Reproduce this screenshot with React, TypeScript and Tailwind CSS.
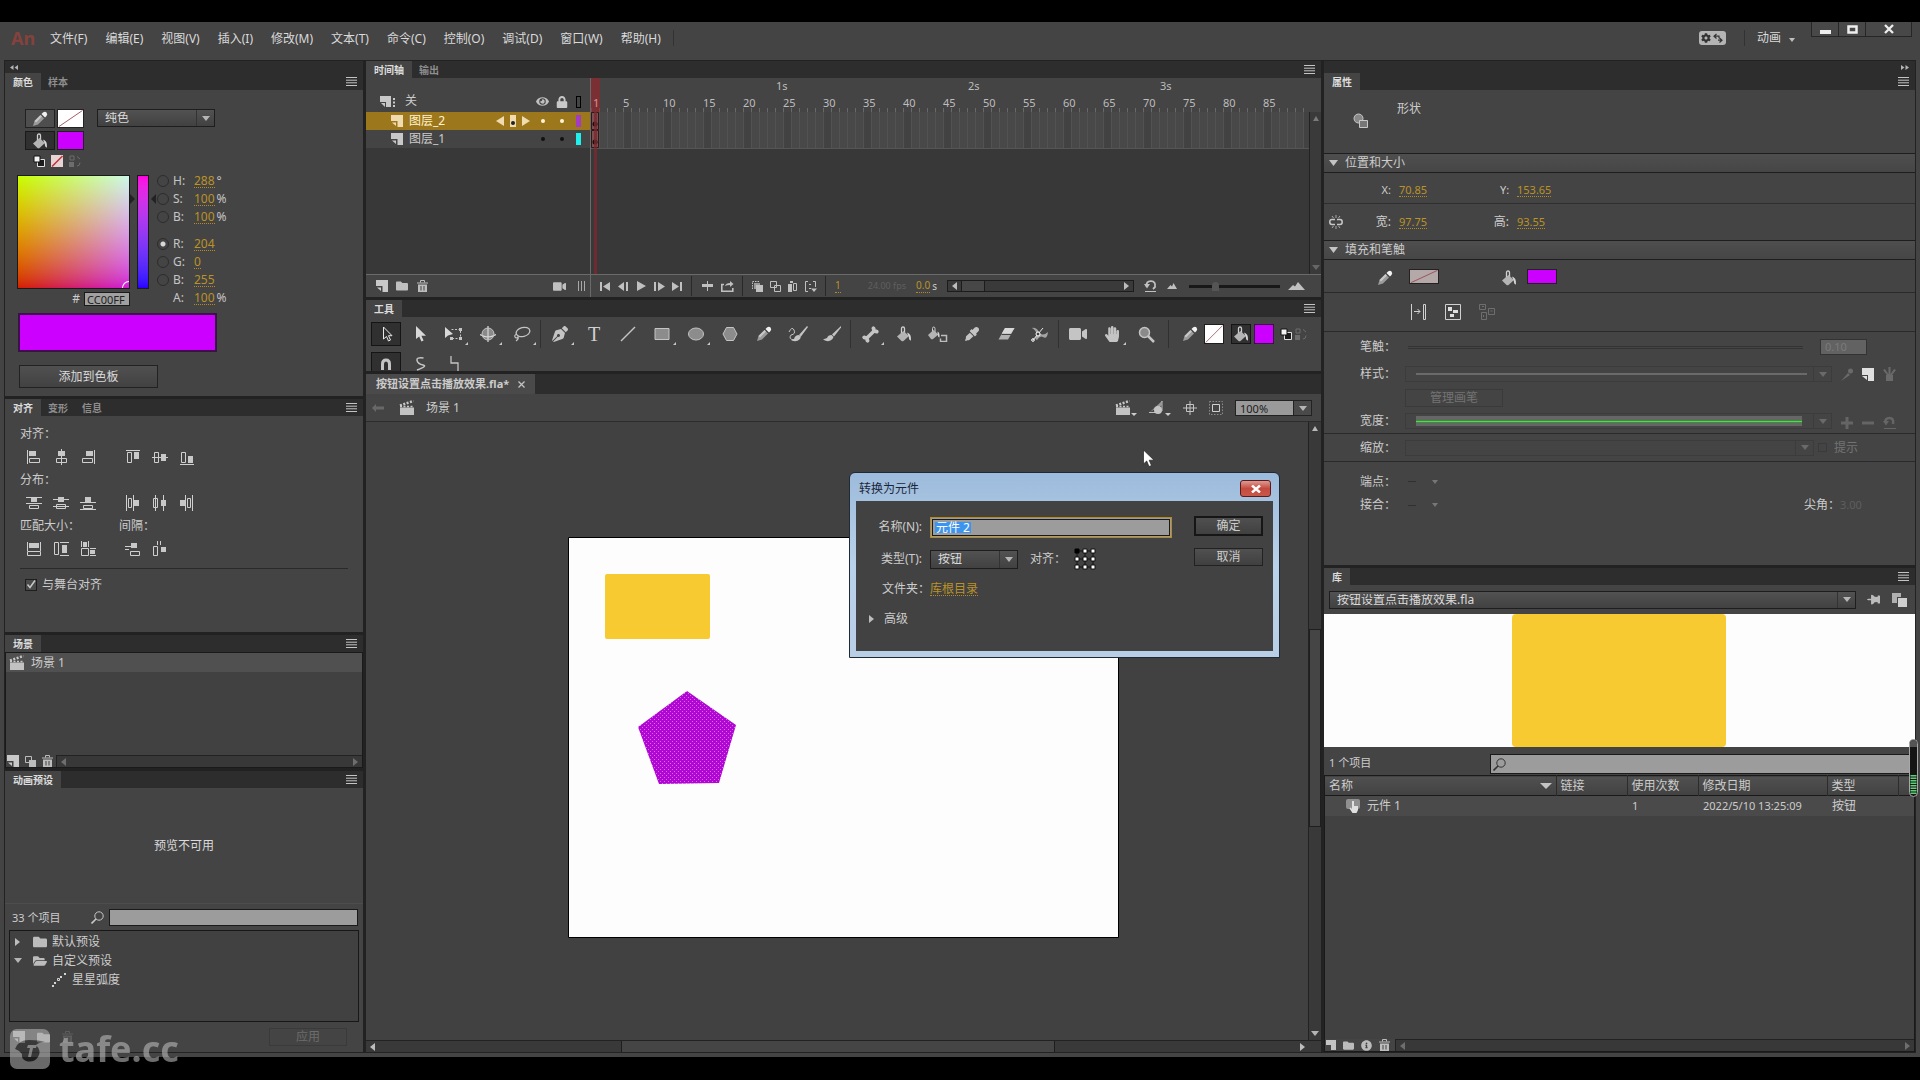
import { useState } from "react";
import type { ReactNode } from "react";
import { FaBone, FaCog, FaEye, FaEyeDropper, FaFolder, FaFolderOpen, FaHandPaper, FaInfoCircle, FaLock, FaPenNib, FaThumbtack, FaVideo } from "react-icons/fa";

const menus = ["文件(F)", "编辑(E)", "视图(V)", "插入(I)", "修改(M)", "文本(T)", "命令(C)", "控制(O)", "调试(D)", "窗口(W)", "帮助(H)"];
const frameNumbers = Array.from({ length: 17 }, (_, i) => (i + 1) * 5);

/* ---------- icons ---------- */

function Svg({ w = 16, h = 16, className = "", children }: { w?: number; h?: number; className?: string; children: ReactNode }) {
  return (
    <svg width={w} height={h} viewBox={`0 0 ${w} ${h}`} fill="none" className={`shrink-0 ${className}`} aria-hidden="true">
      {children}
    </svg>
  );
}

const Menu = () => <Svg w={11} h={9}><path d="M0 .5h11M0 3.2h11M0 5.8h11M0 8.5h11" stroke="#c4c4c4" /></Svg>;

const Pencil = () => (
  <Svg>
    <path d="M1 15l1.500-5 6-6 3.500 3.500-6 6z" fill="#9a9a9a" />
    <path d="M2.500 10l6-6 1.500 1.500-6 6z" fill="#c8c8c8" />
    <path d="M9.500 3l1.500-1.500q2-1.500 3.500 0t0 3.500L13 6.500z" fill="#f2f2f2" />
  </Svg>
);

const Bucket = () => (
  <Svg>
    <path d="M5.500 8V2.500q0-1.500 1.500-1.500t1.500 1.500V7" stroke="#cfcfcf" strokeWidth="1.300" />
    <path d="M1 10.500L7.500 5l5.500 5-5.500 5q-1 .6-2 0z" fill="#b4b4b4" />
    <path d="M11 6.500q4.500 1 4 8-2 0-2.200-3.500z" fill="#d4d4d4" />
  </Svg>
);

const InkBottle = () => (
  <Svg w={20}>
    <path d="M4.500 7V2.500q0-1.500 1.200-1.500t1.300 1.500V6" stroke="#cfcfcf" />
    <path d="M0 9l5.500-5 5 4.500L5 13q-1 .6-2 0z" fill="#b4b4b4" />
    <path d="M9.500 5.500q2.500 1 2 6-1.500 0-1.700-2.500z" fill="#d4d4d4" />
    <path d="M13 9.500h5.500v6h-6v-3" stroke="#bdbdbd" strokeWidth="1.500" />
  </Svg>
);

const Clapper = () => (
  <Svg>
    <path d="M1 7.500h14V15H1z" fill="#c2c2c2" />
    <path d="M1 5.500L14.500 1" stroke="#c8c8c8" strokeWidth="2.500" strokeDasharray="2 1.500" />
    <path d="M1 6.500h14" stroke="#c8c8c8" strokeWidth="1.500" strokeDasharray="2 1.500" />
  </Svg>
);

const Layer = ({ fill = "#c8c8c8" }: { fill?: string }) => (
  <Svg w={12} h={12}><path d="M0 0h12v12H6.500V6H0z" fill={fill} /><path d="M1 7.500h4V11z" fill={fill} /></Svg>
);

const Trash = ({ fill = "#bdbdbd" }: { fill?: string }) => (
  <Svg w={11} h={12}>
    <path d="M0 3h11M3.500 2.500v-2h4v2" stroke={fill} />
    <path d="M1 4.500h9V12H1zM3.500 6v4.500h1V6zm3 0v4.500h1V6z" fill={fill} fillRule="evenodd" />
  </Svg>
);

const Search = ({ stroke = "#c8c8c8" }: { stroke?: string }) => (
  <Svg w={13} h={13}><circle cx="8" cy="5" r="4.200" stroke={stroke} /><path d="M5 8L.5 12.500" stroke={stroke} strokeWidth="1.600" /></Svg>
);

const NoColor = () => (
  <svg viewBox="0 0 26 18" preserveAspectRatio="none" className="h-full w-full" aria-hidden="true"><path d="M1 17.500L25.500.5" stroke="#9e5560" /></svg>
);

const SmallBw = () => (
  <Svg w={12} h={12}><path d="M4.500 4.500h7v7h-7z" fill="#1c1c1c" stroke="#e0e0e0" /><path d="M1 1h6v6H1z" fill="#f4f4f4" stroke="#111" /></Svg>
);

const SmallSwap = () => (
  <Svg w={12} h={12}><path d="M1 1h4v4H1zM8 1.500l3 2.500M8 11q3 0 3-3.500" stroke="#6d6d6d" /><path d="M0 7h5v5H0z" fill="#6d6d6d" /></Svg>
);

const Down = ({ fill = "#b5b5b5" }: { fill?: string }) => <Svg w={8} h={5}><path d="M0 0h8L4 5z" fill={fill} /></Svg>;
const Up = ({ fill = "#7a7a7a" }: { fill?: string }) => <Svg w={6} h={5}><path d="M0 5h6L3 0z" fill={fill} /></Svg>;
const Right = ({ fill = "#bdbdbd" }: { fill?: string }) => <Svg w={5} h={8}><path d="M0 0v8l5-4z" fill={fill} /></Svg>;
const Left = ({ fill = "#bdbdbd" }: { fill?: string }) => <Svg w={5} h={8}><path d="M5 0v8L0 4z" fill={fill} /></Svg>;

/* align icons: `line` is stroked, `solid` is filled */
function AlignIcon({ line, solid }: { line: string; solid: string }) {
  return <Svg><path d={line} stroke="#cfcfcf" /><path d={solid} fill="#c8c8c8" /></Svg>;
}

const alignIcons = [
  { name: "左对齐", line: "M1.500 1v14M3.500 9.500h10v4h-10z", solid: "M3 2h7v5H3z" },
  { name: "水平中齐", line: "M8.500 0v16M3.500 9.500h10v4h-10z", solid: "M5 2h7v5H5z" },
  { name: "右对齐", line: "M14.500 1v14M2.500 9.500h10v4h-10z", solid: "M6 2h7v5H6z" },
  { name: "顶对齐", line: "M1 1.500h14M2.500 3.500h4v10h-4z", solid: "M9 3h5v7H9z" },
  { name: "垂直中齐", line: "M0 8.500h16M2.500 3.500h4v10h-4z", solid: "M9 5h5v7H9z" },
  { name: "底对齐", line: "M1 15.500h14M2.500 3.500h4v10h-4z", solid: "M9 7h5v7H9z" },
];
const distributeIcons = [
  { name: "顶部分布", line: "M0 2.500h16M0 8.500h16M3.500 10.500h9v3h-9z", solid: "M5 3h6v4H5z" },
  { name: "垂直居中分布", line: "M0 4.500h16M0 11.500h16M3.500 9.500h9v4h-9z", solid: "M5 2h6v5H5z" },
  { name: "底部分布", line: "M0 7.500h16M0 14.500h16M3.500 10.500h9v3h-9z", solid: "M5 2h6v5H5z" },
  { name: "左侧分布", line: "M1.500 0v16M8.500 0v16M3.500 3.500h3v9h-3z", solid: "M9 5h5v6H9z" },
  { name: "水平居中分布", line: "M3.500 0v16M11.500 0v16M1.500 3.500h4v9h-4z", solid: "M9 5h5v6H9z" },
  { name: "右侧分布", line: "M6.500 0v16M13.500 0v16M8.500 3.500h3v9h-3z", solid: "M1 5h5v6H1z" },
];
const sizeIcons = [
  { name: "匹配宽度", line: "M1.500 1v9M14.500 1v9M1.500 10.500h13v4h-13z", solid: "M3 2h10v5H3z" },
  { name: "匹配高度", line: "M7 1.500h9M7 14.500h9M1.500 1.500h4v12h-4z", solid: "M9 4h5v8H9z" },
  { name: "匹配宽和高", line: "M1.500 0v6M8.500 0v6M1.500 7.500h7v7h-7zM10 7.500h6M10 14.500h6", solid: "M3 1h4v5H3zM10 9h5v4h-5z" },
  { name: "垂直平均间隔", line: "M0 5.500h6M0 8.500h4M5.500 10.500h9v4h-9z", solid: "M6 2h6v5H6z" },
  { name: "水平平均间隔", line: "M5.500 0v4M8.500 0v4M1.500 5.500h4v9h-4z", solid: "M9 6h5v5H9z" },
];

/* ---------- shared controls ---------- */

function PanelTabs({ tabs }: { tabs: string[] }) {
  return (
    <div className="flex h-[17px] shrink-0 items-stretch bg-[#2d2d2d] text-[10px] leading-none">
      {tabs.map((t, i) => (
        <button key={t} type="button" className={i === 0 ? "bg-[#444444] px-2 font-bold text-[#dcdcdc]" : "px-[7px] font-bold text-[#8e8e8e]"}>{t}</button>
      ))}
      <button type="button" aria-label="面板菜单" className="ml-auto flex items-center px-[6px]"><Menu /></button>
    </div>
  );
}

function Select({ label, value, className, dim = false }: { label: string; value: string; className: string; dim?: boolean }) {
  return (
    <div className={`relative flex items-center border ${dim ? "border-[#3c3c3c]" : "border-[#1e1e1e] bg-linear-to-b from-[#525252] to-[#414141]"} ${className}`}>
      <select aria-label={label} disabled={dim} className="h-full w-full appearance-none bg-transparent pl-[7px] text-[12px] leading-none text-[#dadada] outline-none">
        <option>{value}</option>
      </select>
      <span className={`pointer-events-none absolute inset-y-0 right-0 flex w-[18px] items-center justify-center border-l ${dim ? "border-[#3c3c3c]" : "border-[#333333]"}`}>
        <Down fill={dim ? "#6a6a6a" : "#b5b5b5"} />
      </span>
    </div>
  );
}

function Hot({ children }: { children: ReactNode }) {
  return <button type="button" className="h-[14px] border-b border-dotted border-[#b58a20] leading-[13px] text-[#bb9227]">{children}</button>;
}

function IconButton({ label, className = "", children }: { label: string; className?: string; children: ReactNode }) {
  return <button type="button" aria-label={label} className={`flex shrink-0 items-center justify-center ${className}`}>{children}</button>;
}

function AlignGroup({ label, icons }: { label: string; icons: typeof alignIcons }) {
  return (
    <div>
      <div className="h-[18px] leading-[18px]">{label}</div>
      <div className="flex h-7 items-center">
        {icons.map((ic) => (
          <IconButton key={ic.name} label={ic.name} className="w-[27px]"><AlignIcon line={ic.line} solid={ic.solid} /></IconButton>
        ))}
      </div>
    </div>
  );
}

/* ---------- header ---------- */

function Header() {
  return (
    <header className="flex h-[38px] shrink-0 items-start text-[12px] text-[#dadada]">
      <div className="w-[50px] pl-[11px] pt-1 text-[18px] font-bold leading-6 text-[#84423d]">An</div>
      <nav className="flex gap-[18px] pt-[9px]">
        {menus.map((m) => <button key={m} type="button" className="leading-4 whitespace-nowrap">{m}</button>)}
      </nav>
      <span className="mt-2 ml-3 h-4 w-px bg-[#333333]" />
      <button type="button" aria-label="同步设置" className="mt-[9px] ml-auto flex h-[14px] w-[27px] items-center justify-center gap-[2px] rounded-[3px] bg-[#b4b4b4] text-[#333333]">
        <FaCog size={10} />
        <Svg w={10} h={10}><path d="M3.500 1L1 3.200 3.500 5.500M1.500 3.200H6v2M6.500 5L9 7.200 6.500 9.500M8.500 7.200H5" stroke="#333" strokeWidth="1.200" /></Svg>
      </button>
      <span className="mt-2 ml-[18px] h-4 w-px bg-[#333333]" />
      <button type="button" className="mt-2 ml-3 flex items-center gap-2 leading-4">动画<Svg w={6} h={4} className="mt-1"><path d="M0 0h6L3 4z" fill="#c0c0c0" /></Svg></button>
      <div className="mr-2 ml-4 flex h-[15px] border border-t-0 border-[#262626] bg-[#484848]">
        <IconButton label="最小化" className="w-[27px] border-r border-[#262626]"><Svg w={11} h={9}><path d="M0 5h11v4H0z" fill="#eeeeee" /></Svg></IconButton>
        <IconButton label="最大化" className="w-[27px] border-r border-[#262626]"><Svg w={11} h={9}><path d="M1.500 1.500h8v6h-8z" stroke="#eee" strokeWidth="2.500" /></Svg></IconButton>
        <IconButton label="关闭" className="w-[45px]"><Svg w={10} h={10}><path d="M1 1l8 8M9 1L1 9" stroke="#eee" strokeWidth="2.300" /></Svg></IconButton>
      </div>
    </header>
  );
}

/* ---------- left column ---------- */

function ColorPanel() {
  const [mode, setMode] = useState("R");
  const channels = [
    { id: "H", label: "H:", value: "288", unit: "°" },
    { id: "S", label: "S:", value: "100", unit: "%" },
    { id: "V", label: "B:", value: "100", unit: "%" },
    { id: "R", label: "R:", value: "204", unit: "" },
    { id: "G", label: "G:", value: "0", unit: "" },
    { id: "B", label: "B:", value: "255", unit: "" },
    { id: "A", label: "A:", value: "100", unit: "%" },
  ];
  return (
    <section className="h-[323px] shrink-0 bg-[#444444]">
      <PanelTabs tabs={["颜色", "样本"]} />
      <div className="pt-[19px]">
        <div className="flex pl-5">
          <div>
            <div className="flex gap-[2px]">
              <IconButton label="笔触颜色" className="h-[19px] w-[30px] border border-[#222222] bg-[#4e4e4e]"><Pencil /></IconButton>
              <button type="button" aria-label="无笔触" className="h-[19px] w-[27px] border border-[#222222] bg-white"><NoColor /></button>
            </div>
            <div className="mt-[3px] flex gap-[2px]">
              <IconButton label="填充颜色" className="h-[19px] w-[30px] border border-[#1a1a1a] bg-[#303030]"><Bucket /></IconButton>
              <button type="button" aria-label="填充色板" className="h-[19px] w-[27px] border border-[#222222] bg-[#cc00ff]" />
            </div>
            <div className="mt-[5px] flex h-3 gap-[6px] pl-2">
              <IconButton label="黑白"><SmallBw /></IconButton>
              <IconButton label="无颜色"><Svg w={12} h={12}><path d="M0 0h12v12H0z" fill="#e8d4d4" /><path d="M1 11.500L11.500 1" stroke="#c0303a" strokeWidth="1.500" /></Svg></IconButton>
              <IconButton label="交换颜色"><SmallSwap /></IconButton>
            </div>
          </div>
          <Select label="颜色类型" value="纯色" className="ml-[13px] h-[18px] w-[118px]" />
        </div>
        <div className="mt-[5px] flex pl-3">
          <div className="w-[113px] pt-[3px]">
            <div className="relative h-[114px] border border-[#1a1a1a] bg-linear-to-b from-[#c8ff00] to-[#d41c00]">
              <div className="h-full w-full bg-linear-to-b from-[#ccf8e8] to-[#d018d8] [mask-image:linear-gradient(to_right,transparent,black)]" />
              <span className="absolute right-0 bottom-0 h-[7px] w-[7px] rounded-tl-full border-t border-l border-white" />
            </div>
            <div className="mt-[3px] flex justify-end gap-1">
              <label htmlFor="hex" className="leading-[14px]">#</label>
              <input id="hex" defaultValue="CC00FF" className="h-[14px] w-[46px] border border-[#1a1a1a] bg-[#a0a0a0] px-[2px] text-[11px] leading-none text-[#222222] outline-none" />
            </div>
          </div>
          <div className="flex w-[26px] items-start pt-[3px]">
            <Svg w={5} h={10} className="mt-[19px]"><path d="M0 0v10l5-5z" fill="#222" /></Svg>
            <div className="mx-[2px] h-[114px] w-3 shrink-0 border border-[#1a1a1a] bg-linear-to-b from-[#ff00e0] to-[#2a00ff]" />
            <Svg w={5} h={10} className="mt-[19px]"><path d="M5 0v10L0 5z" fill="#222" /></Svg>
          </div>
          <div className="flex flex-col pl-px text-[#c4c4c4]">
            {channels.map((c) => (
              <div key={c.id} className={c.id === "R" ? "mt-[9px] flex h-[18px] items-center" : "flex h-[18px] items-center"}>
                {c.id === "A" ? <span className="w-3" /> : (
                  <input id={`ch-${c.id}`} type="radio" name="channel" checked={mode === c.id} onChange={() => setMode(c.id)} className="h-3 w-3 shrink-0 appearance-none rounded-full border border-[#2c2c2c] checked:bg-[radial-gradient(circle,#d8d8d8_2px,transparent_3px)]" />
                )}
                <label htmlFor={c.id === "A" ? undefined : `ch-${c.id}`} className="w-[25px] pl-1">{c.label}</label>
                <Hot>{c.value}</Hot>
                <span className="pl-[2px]">{c.unit}</span>
              </div>
            ))}
          </div>
        </div>
        <div className="mt-[6px] ml-[13px] h-[39px] w-[199px] border-2 border-[#3c1048] bg-[#cc00ff]" />
        <button type="button" className="mt-[13px] ml-[14px] h-[23px] w-[139px] border border-[#222222] bg-linear-to-b from-[#505050] to-[#424242] text-[#dadada]">添加到色板</button>
      </div>
    </section>
  );
}

function AlignPanel() {
  return (
    <section className="h-[233px] shrink-0 bg-[#444444]">
      <PanelTabs tabs={["对齐", "变形", "信息"]} />
      <div className="px-[15px] pt-[9px]">
        <div className="flex gap-[18px]">
          <AlignGroup label="对齐：" icons={alignIcons.slice(0, 3)} />
          <AlignGroup label=" " icons={alignIcons.slice(3)} />
        </div>
        <div className="flex gap-[18px]">
          <AlignGroup label="分布：" icons={distributeIcons.slice(0, 3)} />
          <AlignGroup label=" " icons={distributeIcons.slice(3)} />
        </div>
        <div className="flex gap-[18px]">
          <AlignGroup label="匹配大小：" icons={sizeIcons.slice(0, 3)} />
          <AlignGroup label="间隔：" icons={sizeIcons.slice(3)} />
        </div>
        <hr className="mt-[5px] border-[#2a2a2a]" />
        <label className="mt-2 flex items-center gap-[5px] pl-[5px]">
          <span className="relative flex h-3 w-3">
            <input type="checkbox" defaultChecked className="peer h-3 w-3 appearance-none border border-[#1e1e1e] bg-[#4a4a4a]" />
            <Svg w={12} h={12} className="pointer-events-none absolute inset-0 hidden peer-checked:block"><path d="M2.500 5.500L5 8.500l5-7" stroke="#c8c8c8" strokeWidth="1.500" /></Svg>
          </span>
          与舞台对齐
        </label>
      </div>
    </section>
  );
}

function ScrollTrack({ className = "" }: { className?: string }) {
  return (
    <div className={`flex flex-1 items-center justify-between border-t border-l border-[#222222] bg-[#383838] px-1 ${className}`}>
      <Left fill="#6e6e6e" />
      <Right fill="#6e6e6e" />
    </div>
  );
}

function ScenePanel() {
  return (
    <section className="flex h-[133px] shrink-0 flex-col bg-[#444444]">
      <PanelTabs tabs={["场景"]} />
      <div className="flex flex-1 flex-col border border-[#1a1a1a] bg-[#414141]">
        <div className="flex h-[19px] items-center gap-[6px] bg-[#505050] pl-[3px]"><Clapper />场景 1</div>
        <div className="mt-auto flex h-3">
          <div className="flex w-[50px] items-center gap-[6px] pl-px">
            <IconButton label="添加场景"><Layer /></IconButton>
            <IconButton label="重制场景"><Svg w={11} h={11}><path d="M.5.5h6v6h-6z" stroke="#bdbdbd" /><path d="M4 4h7v7H4z" fill="#bdbdbd" /></Svg></IconButton>
            <IconButton label="删除场景"><Trash /></IconButton>
          </div>
          <ScrollTrack />
        </div>
      </div>
    </section>
  );
}

function PresetPanel() {
  return (
    <section className="flex flex-1 flex-col bg-[#444444]">
      <PanelTabs tabs={["动画预设"]} />
      <div className="flex h-[116px] items-center justify-center border-b border-[#4d4d4d] text-[#dadada]">预览不可用</div>
      <div className="flex items-center px-[5px] pt-[5px]">
        <label htmlFor="preset-search" className="w-[81px] pl-[2px] text-[11px]">33 个项目</label>
        <Search />
        <input id="preset-search" className="ml-[5px] h-[17px] min-w-0 flex-1 border border-[#1a1a1a] bg-[#9c9c9c] px-1 outline-none" />
      </div>
      <ul className="mx-1 mt-1 h-[92px] border border-[#181818] bg-[#414141] pt-px">
        <li className="flex h-[19px] items-center"><span className="w-[23px] pl-[5px]"><Right /></span><FaFolder size={14} color="#bcbcbc" /><span className="pl-[5px]">默认预设</span></li>
        <li className="flex h-[19px] items-center"><span className="w-[23px] pl-1"><Down /></span><FaFolderOpen size={14} color="#bcbcbc" /><span className="pl-[5px]">自定义预设</span></li>
        <li className="flex h-[19px] items-center pl-[42px]">
          <Svg w={14} h={14}><path d="M0 12h2v2H0zM2 9h2v2H2zM8 3h2v2H8zM12 0h2v2h-2z" fill="#d4d4d4" /><path d="M5.500 5.500h2v2h-2z" stroke="#d4d4d4" /></Svg>
          <span className="pl-[6px]">星星弧度</span>
        </li>
      </ul>
      <div className="flex items-center gap-3 pt-[6px] pr-4 pl-2">
        <IconButton label="另存预设"><Layer /></IconButton>
        <IconButton label="新建文件夹"><FaFolder size={13} color="#bcbcbc" /></IconButton>
        <IconButton label="删除预设"><Trash fill="#5c5c5c" /></IconButton>
        <button type="button" disabled className="ml-auto h-[18px] w-[78px] border border-[#3a3a3a] text-[#6c6c6c]">应用</button>
      </div>
    </section>
  );
}

/* ---------- timeline ---------- */

function LayerRow({ name, active = false }: { name: string; active?: boolean }) {
  const ink = active ? "#fff6d8" : "#111111";
  return (
    <div className={active ? "flex h-[18px] items-center bg-[#9c771c] pl-[25px] text-[#fff3cf]" : "flex h-[18px] items-center bg-[#444444] pl-[25px]"}>
      <Layer fill={active ? "#f0dcae" : "#c8c8c8"} />
      <span className="flex-1 pl-[6px]">{name}</span>
      {active && (
        <span className="flex items-center gap-[6px] pr-[11px]">
          <Svg w={8} h={10}><path d="M8 0v10L0 5z" fill="#f0dcae" /></Svg>
          <Svg w={6} h={12}><path d="M0 0h6v12H0z" fill="#f0dcae" /><circle cx="3" cy="8" r="2" fill="#222" /></Svg>
          <Svg w={8} h={10}><path d="M0 0v10l8-5z" fill="#f0dcae" /></Svg>
        </span>
      )}
      <Svg w={4} h={4}><circle cx="2" cy="2" r="2" fill={ink} /></Svg>
      <Svg w={4} h={4} className="ml-[15px]"><circle cx="2" cy="2" r="2" fill={ink} /></Svg>
      <span className={active ? "mr-[9px] ml-3 h-3 w-[5px] bg-[#a43bc4]" : "mr-[9px] ml-3 h-3 w-[5px] bg-[#20f0ec]"} />
    </div>
  );
}

function Timeline() {
  const keyframe = <Svg w={8} h={18}><path d="M.5.5h7v17h-7z" fill="#7c5050" stroke="#301818" /><circle cx="4" cy="12" r="2.500" fill="#1a1010" /></Svg>;
  return (
    <section className="flex h-[236px] shrink-0 flex-col bg-[#444444]">
      <PanelTabs tabs={["时间轴", "输出"]} />
      <div className="flex min-h-0 flex-1">
        <div className="flex w-[225px] shrink-0 flex-col border-r border-[#6a6a6a] bg-[#383838]">
          <div className="flex h-[34px] items-end bg-[#444444] pb-[4px] pl-[14px]">
            <Svg w={16} h={13}><path d="M0 1h11v11H6V7H0z" fill="#c8c8c8" /><path d="M1 8h4v4zM13 3h2v2h-2zM13 6.500h2v2h-2zM13 10h2v2h-2z" fill="#c8c8c8" /></Svg>
            <span className="flex-1 pl-[9px] leading-[14px]">关</span>
            <FaEye size={13} color="#c0c0c0" />
            <FaLock size={12} color="#c8c8c8" className="ml-[7px]" />
            <span className="mr-[9px] ml-2 h-3 w-[5px] border border-black" />
          </div>
          <LayerRow name="图层_2" active />
          <LayerRow name="图层_1" />
        </div>
        <div className="relative min-w-0 flex-1 overflow-hidden bg-[#383838]">
          <div className="h-[34px] bg-[#444444] bg-[repeating-linear-gradient(90deg,#686868_0_1px,transparent_1px_8px)] bg-[length:100%_4px] bg-bottom bg-no-repeat text-[11px] text-[#bdbdbd]">
            <div className="flex h-[17px] pt-px pl-[185px] leading-[14px]">
              {["1s", "2s", "3s"].map((s) => <span key={s} className="w-[192px] shrink-0">{s}</span>)}
            </div>
            <div className="relative flex leading-4">
              <span className="w-8 shrink-0 pl-[2px] text-white">1</span>
              {frameNumbers.map((n) => <span key={n} className="w-10 shrink-0">{n}</span>)}
            </div>
          </div>
          <div className="flex h-[37px] border-b border-[#555555] bg-[#484848] bg-[repeating-linear-gradient(90deg,#525252_0_1px,transparent_1px_8px),repeating-linear-gradient(90deg,transparent_0_32px,#424242_32px_40px)]">
            <div className="flex flex-col">{keyframe}{keyframe}</div>
          </div>
          <div className="absolute top-0 left-0 h-[34px] w-[9px] bg-[#b01c20]/50" />
          <div className="absolute top-[34px] bottom-0 left-[3px] w-[3px] bg-[#7c2830]/80" />
        </div>
        <div className="mt-[34px] flex w-3 shrink-0 flex-col items-center justify-between border-l border-[#222222] bg-[#3a3a3a] py-1">
          <Up /><Down fill="#666666" />
        </div>
      </div>
      <TimelineBar />
    </section>
  );
}

function TimelineBar() {
  const sep = <span className="mx-[5px] h-5 w-px shrink-0 bg-[#292929]" />;
  const fill = "#c0c0c0";
  const btn = "h-5 w-[18px]";
  return (
    <div className="flex h-[23px] shrink-0 items-center border-t border-[#6a6a6a]">
      <div className="flex w-[225px] shrink-0 items-center self-stretch border-r border-[#6a6a6a] pl-[10px]">
        <IconButton label="新建图层"><Layer /></IconButton>
        <IconButton label="新建文件夹" className="ml-2"><FaFolder size={12} color={fill} /></IconButton>
        <IconButton label="删除" className="ml-[9px]"><Trash /></IconButton>
        <IconButton label="添加摄像头" className="ml-auto"><FaVideo size={13} color={fill} /></IconButton>
        <Svg w={7} h={10} className="mr-[5px] ml-3"><path d="M.5 0v10M3.500 0v10M6.500 0v10" stroke="#a8a8a8" /></Svg>
      </div>
      <div className="flex items-center pl-[5px]">
        <IconButton label="转到第一帧" className={btn}><Svg w={10} h={9}><path d="M0 0h2v9H0zM10 0v9L3 4.500z" fill={fill} /></Svg></IconButton>
        <IconButton label="后退一帧" className={btn}><Svg w={11} h={9}><path d="M6 0v9L0 4.500z" fill={fill} /><path d="M8 0h2v9H8z" fill={fill} /></Svg></IconButton>
        <IconButton label="播放" className={btn}><Svg w={9} h={10}><path d="M0 0v10l9-5z" fill={fill} /></Svg></IconButton>
        <IconButton label="前进一帧" className={btn}><Svg w={11} h={9}><path d="M0 0h2v9H0zM4 0v9l7-4.500z" fill={fill} /></Svg></IconButton>
        <IconButton label="转到最后一帧" className={btn}><Svg w={10} h={9}><path d="M0 0v9l7-4.500zM8 0h2v9H8z" fill={fill} /></Svg></IconButton>
      </div>
      {sep}
      <IconButton label="帧居中" className="h-5 w-5"><Svg w={11} h={10}><path d="M0 3h5V0h1v3h5v3H6v4H5V6H0z" fill={fill} /></Svg></IconButton>
      <IconButton label="循环" className="h-5 w-5"><Svg w={13} h={11}><path d="M3 3.500H.8v6.700h11V7" stroke={fill} strokeWidth="1.600" /><path d="M4 5q1-3 5-3V0l3.500 3L9 6V4Q6 4 4 5z" fill={fill} /></Svg></IconButton>
      {sep}
      <IconButton label="绘图纸外观" className={btn}><Svg w={11} h={11}><path d="M4 4h7v7H4z" fill={fill} /><path d="M.5 8V.5H8" stroke={fill} strokeDasharray="1.500 1" /><path d="M2 2h6v2H4v4H2z" fill="#999" /></Svg></IconButton>
      <IconButton label="绘图纸外观轮廓" className={btn}><Svg w={11} h={11}><path d="M.5.5h6v6h-6zM4.500 4.500h6v6h-6z" stroke={fill} /></Svg></IconButton>
      <IconButton label="编辑多个帧" className={btn}><Svg w={10} h={11}><path d="M0 3h4v8H0zM2 0h3v2H2z" fill={fill} /><path d="M5.500 2.500h3v7h-3z" stroke={fill} /></Svg></IconButton>
      <IconButton label="修改标记" className={btn}><Svg w={12} h={11}><path d="M3 .5H.5v10H3M8 .5h2.500V6M4 3.500h2M4 7.500h2" stroke={fill} /><path d="M6 7.500h6L9 11z" fill={fill} /></Svg></IconButton>
      {sep}
      <span className="flex w-[116px] shrink-0 items-center pl-1 text-[10px]">
        <Hot>1</Hot>
        <span className="ml-[27px] text-[9px] text-[#5f5f5f]">24.00 fps</span>
        <span className="ml-[10px] flex items-center gap-[2px]"><Hot>0.0</Hot>s</span>
      </span>
      <div className="flex h-3 min-w-0 flex-1 items-center justify-between border border-[#1c1c1c] bg-[#3a3a3a] px-1">
        <Left /><span className="mr-auto ml-1 h-full w-6 border-x border-[#1c1c1c] bg-[#474747]" /><Right />
      </div>
      <IconButton label="重设缩放" className="ml-[10px] h-5 w-3"><Svg w={13} h={12}><path d="M2.500 6.500Q2 1 7 1.200T11 7L9 9" stroke={fill} strokeWidth="1.800" /><path d="M0 4h6L3 8.500z" fill={fill} /><path d="M1 11.500h11" stroke={fill} /></Svg></IconButton>
      <Svg w={10} h={6} className="ml-[11px]"><path d="M0 6l3.500-4L5 3.500 6.500 0 10 6z" fill={fill} /></Svg>
      <input type="range" aria-label="时间轴缩放" defaultValue={27} className="mr-2 ml-3 h-[3px] w-[91px] appearance-none bg-[#181818] [&::-webkit-slider-thumb]:h-[9px] [&::-webkit-slider-thumb]:w-[7px] [&::-webkit-slider-thumb]:appearance-none [&::-webkit-slider-thumb]:rounded-t-full [&::-webkit-slider-thumb]:bg-[#555555]" />
      <Svg w={17} h={8} className="mr-4"><path d="M0 8l5-5 2 1.500L10 0l7 8z" fill={fill} /></Svg>
    </div>
  );
}

/* ---------- tools ---------- */

function Tool({ label, more = false, active = false, children }: { label: string; more?: boolean; active?: boolean; children: ReactNode }) {
  return (
    <button type="button" aria-label={label} className="relative flex h-6 w-[34px] shrink-0 items-center justify-center">
      <span className={active ? "flex h-6 w-[30px] items-center justify-center border border-[#151515] bg-[#303030]" : "flex"}>{children}</span>
      {more && <Svg w={3} h={3} className="absolute right-[3px] bottom-px"><path d="M3 0v3H0z" fill="#c8c8c8" /></Svg>}
    </button>
  );
}

function Tools() {
  const sep = <span className="mr-[2px] ml-px h-7 w-px shrink-0 bg-[#303030]" />;
  const c = "#c4c4c4";
  return (
    <section className="flex h-[71px] shrink-0 flex-col overflow-hidden bg-[#444444]">
      <PanelTabs tabs={["工具"]} />
      <div className="flex shrink-0 items-center pt-[3px] pl-[3px]">
        <Tool label="选择工具" active><Svg><path d="M5.500 1v12l3-2.500 2 4.500 2-1-2-4.300h3.500z" stroke="#e8e8e8" /></Svg></Tool>
        <Tool label="部分选取工具"><Svg><path d="M4 0v13l3.200-2.500 2.200 5 2.200-1-2.200-4.800H14z" fill="#d8d8d8" /></Svg></Tool>
        <Tool label="任意变形工具" more><Svg w={18}><path d="M0 1v11l3-2.500L8 8z" fill="#d8d8d8" /><path d="M6.500 3.500h9v9h-10" stroke={c} strokeDasharray="2 1.500" /><path d="M14 2h3v3h-3zM14 11h3v3h-3zM5 11h3v3H5z" fill={c} /></Svg></Tool>
        <Tool label="3D旋转工具" more><Svg><circle cx="8" cy="8" r="6" fill="#8a8a8a" /><path d="M8 0v16M0 8.500q8 5 16 0" stroke="#d8d8d8" strokeWidth="1.200" /><circle cx="8" cy="8" r="6" stroke="#c4c4c4" /></Svg></Tool>
        <Tool label="套索工具" more><Svg w={18}><ellipse cx="10" cy="6" rx="7" ry="4.500" transform="rotate(-14 10 6)" stroke={c} strokeWidth="1.300" /><path d="M4 8q-3 1-2 3t3 0q1 2-2 4" stroke={c} strokeWidth="1.200" /></Svg></Tool>
        {sep}
        <Tool label="钢笔工具" more><FaPenNib size={16} color={c} className="-scale-x-100 rotate-90" /></Tool>
        <Tool label="文本工具"><span className="font-['Liberation_Serif',serif] text-[20px] leading-4 text-[#d0d0d0]">T</span></Tool>
        <Tool label="线条工具"><Svg><path d="M1 15L15 1" stroke={c} strokeWidth="1.500" /></Svg></Tool>
        <Tool label="矩形工具" more><Svg><path d="M1 2.500h14v11H1z" fill="#8c8c8c" stroke={c} /></Svg></Tool>
        <Tool label="椭圆工具" more><Svg><ellipse cx="8" cy="8" rx="7.500" ry="6" fill="#8c8c8c" stroke={c} /></Svg></Tool>
        <Tool label="多角星形工具"><Svg><path d="M4.500 1.500h7L15 8l-3.500 6.500h-7L1 8z" fill="#8c8c8c" stroke={c} /></Svg></Tool>
        <Tool label="铅笔工具"><Pencil /></Tool>
        <Tool label="画笔工具"><Svg w={20}><path d="M19 0l-8 9 2 1.500L20 1z" fill={c} /><path d="M11 9q-4 0-5 4l-3 1q5 3 9-1l1-2.500z" fill={c} /><path d="M1 6q3-6 5-2T3 9q-3 4 3 5" stroke={c} /></Svg></Tool>
        <Tool label="画笔工具 B"><Svg w={18}><path d="M18 0l-9 8.500 2 2L18 1.500z" fill={c} /><path d="M8.500 9Q5 9 4 12l-4 1.500q6 3.500 9.500-.5L10.500 11z" fill={c} /></Svg></Tool>
        {sep}
        <Tool label="骨骼工具" more><FaBone size={17} color={c} className="-rotate-45" /></Tool>
        <Tool label="颜料桶工具"><Bucket /></Tool>
        <Tool label="墨水瓶工具"><InkBottle /></Tool>
        <Tool label="滴管工具"><FaEyeDropper size={14} color={c} /></Tool>
        <Tool label="橡皮擦工具"><Svg w={17}><path d="M7 2h9.500L10 13.500H.5z" fill="#b0b0b0" /><path d="M7 2h9.500L13 7.500H3.800z" fill="#d8d8d8" /><path d="M3.500 8.500h9.500" stroke="#444" /></Svg></Tool>
        <Tool label="宽度工具"><Svg w={18}><path d="M1 2q4-1 7 4t9 0q-1 8-5 5-3-2-6 3-4-2 0-5Q5 4 1 2z" fill="#a4a4a4" /><path d="M2 14L12 2" stroke="#e8e8e8" /><circle cx="7" cy="8" r="2" fill="#444" stroke="#fff" /><circle cx="2" cy="14" r="1.300" stroke="#fff" /></Svg></Tool>
        {sep}
        <Tool label="摄像头"><FaVideo size={18} color={c} /></Tool>
        <Tool label="手形工具" more><FaHandPaper size={16} color={c} /></Tool>
        <Tool label="缩放工具"><Svg w={17} h={17}><circle cx="6.500" cy="6.500" r="5" fill="#8a8a8a" stroke={c} strokeWidth="1.500" /><path d="M10 10l6 6" stroke={c} strokeWidth="2.500" /></Svg></Tool>
        <span className="mx-[5px] h-7 w-px shrink-0 bg-[#303030]" />
        <IconButton label="笔触颜色" className="ml-2"><Pencil /></IconButton>
        <button type="button" aria-label="笔触色板" className="ml-[6px] h-5 w-5 shrink-0 border border-[#1e1e1e] bg-white"><NoColor /></button>
        <IconButton label="填充颜色" className="ml-[7px] h-5 w-5 border border-[#151515] bg-[#303030]"><Bucket /></IconButton>
        <button type="button" aria-label="填充色板" className="ml-[3px] h-5 w-5 shrink-0 border border-[#3a1046] bg-[#cc00ff]" />
        <IconButton label="黑白" className="ml-[6px]"><SmallBw /></IconButton>
        <IconButton label="交换颜色" className="ml-[3px]"><SmallSwap /></IconButton>
      </div>
      <div className="mt-1 flex shrink-0 items-center pl-[3px]">
        <Tool label="贴紧至对象" active><Svg w={14} h={14}><path d="M3.500 13V7Q3.500 3 7 3t3.500 4v6" stroke={c} strokeWidth="3" /></Svg></Tool>
        <Tool label="平滑"><Svg><path d="M11.500 2Q4 1 5 4.500T11 9t-6 5" stroke={c} strokeWidth="1.500" /></Svg></Tool>
        <Tool label="伸直"><Svg><path d="M5 0v7h7v8" stroke={c} strokeWidth="1.300" /></Svg></Tool>
      </div>
    </section>
  );
}

/* ---------- document ---------- */

function ConvertDialog() {
  return (
    <div role="dialog" aria-label="转换为元件" className="absolute top-[50px] left-[483px] w-[431px] rounded-t-md border border-[#1f2a33] bg-linear-to-b from-[#9dbbdc] via-[#b9d1ea] to-[#b9cfe6] px-[6px] pb-[6px] text-[12px]">
      <div className="flex h-[28px] items-center justify-between">
        <h2 className="pt-[3px] pl-[3px] text-[#1b2638]">转换为元件</h2>
        <button type="button" aria-label="关闭" className="mt-[3px] mr-[2px] flex h-[17px] w-[31px] items-center justify-center rounded-[3px] border border-[#5c1a1a] bg-linear-to-b from-[#dc9a92] via-[#c44a40] to-[#c8584a]">
          <Svg w={10} h={8}><path d="M1 .5l8 7M9 .5l-8 7" stroke="#fff" strokeWidth="2.400" /></Svg>
        </button>
      </div>
      <div className="flex h-[150px] bg-[#424242] pt-[15px] pr-[10px] pl-[13px]">
        <div className="flex-1">
          <div className="flex h-[22px] items-center">
            <label htmlFor="symbol-name" className="w-[61px] pr-2 text-right whitespace-nowrap">名称(N):</label>
            <div className="flex h-[21px] w-[242px] border border-[#b58a20] bg-[#9c9c9c] p-px">
              <div className="relative flex w-full border border-[#1a1a1a]">
                <span className="absolute inset-y-[2px] left-[2px] w-[36px] bg-[#3c94ee]" />
                <input id="symbol-name" defaultValue="元件 2" className="relative w-full bg-transparent px-[3px] text-[12px] leading-none text-white outline-none" />
              </div>
            </div>
          </div>
          <div className="mt-[10px] flex h-[22px] items-center">
            <span className="w-[61px] pr-2 text-right whitespace-nowrap">类型(T):</span>
            <Select label="类型" value="按钮" className="h-[19px] w-[88px]" />
            <span className="pl-3">对齐：</span>
            <Svg w={22} h={22} className="ml-2">
              <path d="M3 3h16v16H3zM3 11h16M11 3v16" stroke="#111" />
              <path d="M1 1h4v4H1z" fill="#000" stroke="#000" />
              {[[9, 1], [17, 1], [1, 9], [9, 9], [17, 9], [1, 17], [9, 17], [17, 17]].map(([x, y]) => (
                <path key={`${x}-${y}`} d={`M${x} ${y}h4v4h-4z`} fill="#fff" stroke="#111" />
              ))}
            </Svg>
          </div>
          <div className="mt-2 flex h-[22px] items-center">
            <span className="w-[61px] text-right">文件夹：</span>
            <Hot>库根目录</Hot>
          </div>
          <button type="button" className="mt-2 flex h-[22px] items-center gap-[10px]"><Right />高级</button>
        </div>
        <div className="flex w-[69px] flex-col gap-3">
          <button type="button" className="h-5 border-2 border-[#161616] bg-linear-to-b from-[#505050] to-[#404040] leading-4">确定</button>
          <button type="button" className="h-[18px] border border-[#222222] bg-linear-to-b from-[#505050] to-[#404040] leading-4">取消</button>
        </div>
      </div>
    </div>
  );
}

function Document() {
  return (
    <section className="flex min-h-0 flex-1 flex-col bg-[#444444]">
      <div className="flex h-5 shrink-0 bg-[#2d2d2d] text-[11px] font-bold">
        <div className="flex items-center gap-[9px] bg-[#4a4a4a] px-[10px]">
          按钮设置点击播放效果.fla*
          <button type="button" aria-label="关闭文档"><Svg w={7} h={7}><path d="M.5.5l6 6M6.500.5l-6 6" stroke="#c4c4c4" strokeWidth="1.300" /></Svg></button>
        </div>
      </div>
      <div className="flex h-7 shrink-0 items-center border-b border-[#2c2c2c] pt-px pl-[6px]">
        <Svg w={12} h={8}><path d="M0 4l4-4v2.500h8v3H4V8z" fill="#686868" /></Svg>
        <span className="flex items-center gap-[11px] pl-[15px]"><Clapper />场景 1</span>
        <div className="ml-auto flex items-center gap-3 pr-[9px]">
          <IconButton label="编辑场景"><Clapper /><Svg w={6} h={3} className="mt-3"><path d="M0 0h6L3 3z" fill="#ccc" /></Svg></IconButton>
          <IconButton label="编辑元件"><Svg><path d="M0 12.500h8L13 1v10" stroke="#bdbdbd" /><path d="M1 12L13 1v4z" fill="#999" /><circle cx="9" cy="10" r="4" fill="#c4c4c4" /></Svg><Svg w={6} h={3} className="mt-3"><path d="M0 0h6L3 3z" fill="#ccc" /></Svg></IconButton>
          <IconButton label="舞台居中"><Svg w={14} h={14}><path d="M7 0v14M0 7h14M3.500 3.500h7v7h-7z" stroke="#c4c4c4" /></Svg></IconButton>
          <IconButton label="剪切舞台外内容"><Svg w={14} h={14}><path d="M.5.5h13v13H.5z" stroke="#8a8a8a" strokeDasharray="1.500 1.500" /><path d="M3.500 3.500h7v7h-7z" stroke="#d0d0d0" /></Svg></IconButton>
          <div className="relative flex h-4 w-[77px] border border-[#222222]">
            <select aria-label="缩放" className="w-full appearance-none bg-[#9a9a9a] pl-1 text-[11px] leading-none text-[#1c1c1c]"><option>100%</option></select>
            <span className="pointer-events-none absolute inset-y-0 right-0 flex w-[18px] items-center justify-center border-l border-[#222222] bg-[#4a4a4a]"><Down /></span>
          </div>
        </div>
      </div>
      <div className="flex min-h-0 flex-1">
        <main className="relative min-w-0 flex-1 bg-[#414141]">
          <svg className="absolute top-[115px] left-[202px]" width="551" height="401" viewBox="0 0 551 401" aria-label="舞台">
            <defs>
              <pattern id="selected" width="4" height="4" patternUnits="userSpaceOnUse">
                <path d="M0 0h4v4H0z" fill="#b008d2" />
                <path d="M0 0h1v1H0zM2 2h1v1H2z" fill="#d868ee" />
              </pattern>
            </defs>
            <path d="M.5.5h550v400H.5z" fill="#fdfdfd" stroke="#000" />
            <rect x="37" y="37" width="105" height="65" rx="2" fill="#f7ca31" />
            <path d="M119 154l49 34-17 58-60 1-21-57z" fill="url(#selected)" />
          </svg>
          <ConvertDialog />
          <Svg w={12} h={19} className="absolute top-[27px] left-[777px]"><path d="M.5 1v14l3.200-3 2.300 5.500 2.500-1-2.300-5.300H11z" fill="#fff" stroke="#222" strokeWidth=".7" /></Svg>
        </main>
        <div className="flex w-[13px] shrink-0 flex-col items-center border-l border-[#222222] bg-[#393939] py-1">
          <Up fill="#b8b8b8" />
          <span className="mt-[198px] h-[198px] w-full border border-[#1e1e1e] bg-[#454545]" />
          <span className="mt-auto"><Down /></span>
        </div>
      </div>
      <div className="flex h-3 shrink-0 items-center border-t border-[#222222] bg-[#393939] pr-4 pl-1">
        <Left />
        <span className="mx-auto h-full w-[434px] border-x border-[#1e1e1e] bg-[#454545]" />
        <Right />
      </div>
    </section>
  );
}

/* ---------- right column ---------- */

function SectionTitle({ children }: { children: ReactNode }) {
  return (
    <h3 className="flex h-5 items-center gap-[7px] border-y border-[#1e1e1e] bg-linear-to-b from-[#4e4e4e] to-[#464646] pl-[5px] font-normal">
      <Svg w={9} h={6}><path d="M0 0h9L4.500 6z" fill="#c4c4c4" /></Svg>{children}
    </h3>
  );
}

function Properties() {
  const label = "w-[81px] shrink-0 pl-9";
  return (
    <section className="flex h-[492px] shrink-0 flex-col bg-[#444444]">
      <PanelTabs tabs={["属性"]} />
      <div className="flex h-[63px] pt-[11px] pl-[29px]">
        <Svg className="mt-3"><circle cx="5.500" cy="5.500" r="4.500" fill="#888" stroke="#c8c8c8" /><path d="M6.500 7.500h8v7h-8z" fill="#777" stroke="#c8c8c8" /></Svg>
        <span className="pl-7">形状</span>
      </div>
      <SectionTitle>位置和大小</SectionTitle>
      <div className="flex h-[31px] items-center border-b border-[#2e2e2e] pt-1 text-[11px]">
        <span className="w-[67px] text-right">X:</span><span className="w-[109px] pl-2"><Hot>70.85</Hot></span>
        <span className="w-[9px] text-right">Y:</span><span className="pl-2"><Hot>153.65</Hot></span>
      </div>
      <div className="flex h-[36px] items-center text-[11px]">
        <IconButton label="锁定宽高" className="ml-[5px]"><Svg w={14} h={14}><path d="M6 4.500H3Q.8 4.500.8 7T3 9.500h3M8 4.500h3q2.200 0 2.200 2.500T11 9.500H8" stroke="#c8c8c8" strokeWidth="1.500" /><path d="M7 0v3M7 11v3M3 1l1.500 2M11 1L9.500 3M3 13l1.500-2M11 13l-1.500-2" stroke="#a8a8a8" /></Svg></IconButton>
        <span className="w-12 text-right text-[12px]">宽:</span><span className="w-[100px] pl-2"><Hot>97.75</Hot></span>
        <span className="w-[18px] text-right text-[12px]">高:</span><span className="pl-2"><Hot>93.55</Hot></span>
      </div>
      <SectionTitle>填充和笔触</SectionTitle>
      <div className="flex h-[33px] items-center border-b border-[#2a2a2a] pl-[53px]">
        <span className="pt-[3px]"><Pencil /></span>
        <button type="button" aria-label="笔触颜色" className="ml-4 h-[15px] w-[30px] border border-[#222222] bg-[#b4a8a8]"><NoColor /></button>
        <span className="w-[62px]" />
        <span className="pt-[3px]"><Bucket /></span>
        <button type="button" aria-label="填充颜色" className="ml-[10px] h-[15px] w-[30px] border border-[#222222] bg-[#cc00ff]" />
      </div>
      <div className="flex h-[39px] items-center gap-[18px] border-b border-[#2a2a2a] pl-[87px]">
        <IconButton label="对象绘制"><Svg><path d="M.5 0v16M3 7.500h6M6.500 5L9 7.500 6.500 10" stroke="#d0d0d0" /><path d="M12.500.5h2v15h-2z" stroke="#d0d0d0" /></Svg></IconButton>
        <IconButton label="编辑对象"><Svg><path d="M.5.5h15v15H.5z" stroke="#d0d0d0" /><path d="M3 3h4v4H3zM8 6h5v3H8zM5 10h4v3H5z" fill="#e0e0e0" /></Svg></IconButton>
        <IconButton label="组合"><Svg><path d="M.5.5h6v5h-6zM2.500 8.500h5v7h-5zM9.500 4.500h6v6h-6zM3 2.500h2M4.500 11v2M11.500 7h2" stroke="#6e6e6e" /></Svg></IconButton>
      </div>
      <div className="flex h-[30px] items-center">
        <label htmlFor="stroke" className={label}>笔触：</label>
        <input id="stroke" type="range" disabled defaultValue={0} className="ml-[3px] h-[3px] min-w-0 flex-1 appearance-none border-y border-[#333333] [&::-webkit-slider-thumb]:appearance-none" />
        <input aria-label="笔触大小" disabled defaultValue="0.10" className="mr-[48px] ml-[17px] h-4 w-[47px] border border-[#333333] bg-[#626262] px-1 text-[11px] text-[#7b7b7b]" />
      </div>
      <div className="flex h-6 items-center">
        <span className={label}>样式：</span>
        <div className="relative min-w-0 flex-1">
          <Select label="样式" value="" dim className="h-4" />
          <span className="pointer-events-none absolute top-[7px] right-[25px] left-[11px] h-[2px] bg-[#6a6a6a]" />
        </div>
        <div className="flex w-[83px] items-center gap-[9px] pl-[9px]">
          <Svg w={12} h={13}><path d="M0 13l7-8 2 2z" fill="#6a6a6a" /><circle cx="9.500" cy="3" r="2.500" fill="#6a6a6a" /></Svg>
          <IconButton label="新建样式"><Svg w={12} h={13}><path d="M0 0h12v13H6V7H0z" fill="#e0e0e0" /><path d="M0 8h5v4z" fill="#e0e0e0" /></Svg></IconButton>
          <Svg w={13} h={14}><path d="M3 8h7v6H3zM5.500 0h2v8h-2zM0 3l2-1 4 6H4zM13 3l-2-1-4 6h2z" fill="#6a6a6a" /></Svg>
        </div>
      </div>
      <div className="flex h-6 items-center pl-[81px]">
        <button type="button" disabled className="h-[18px] w-[98px] border border-[#3a3a3a] leading-4 text-[#737373]">管理画笔</button>
      </div>
      <div className="flex h-6 items-center border-b border-[#2a2a2a] pb-px">
        <span className={label}>宽度：</span>
        <div className="relative min-w-0 flex-1">
          <Select label="宽度" value="" dim className="h-4" />
          <span className="pointer-events-none absolute top-[3px] right-[30px] left-[11px] flex h-[10px] items-center bg-[#666666]"><span className="h-[3px] w-full border-y border-[#3f8c3f] bg-[#54d854]" /></span>
        </div>
        <div className="flex w-[83px] items-center gap-[9px] pt-[3px] pl-[9px]">
          <Svg w={12} h={12}><path d="M6 0v12M0 6h12" stroke="#656565" strokeWidth="3" /></Svg>
          <Svg w={12} h={12}><path d="M0 6h12" stroke="#656565" strokeWidth="3" /></Svg>
          <Svg w={13} h={13}><path d="M2 7Q2 2 6.500 2T10 8" stroke="#656565" strokeWidth="2.500" /><path d="M0 5h6L3 9.500zM1 12h12v1H1z" fill="#656565" /></Svg>
        </div>
      </div>
      <div className="flex h-7 items-center border-b border-[#2a2a2a]">
        <span className={label}>缩放：</span>
        <Select label="缩放类型" value="" dim className="h-4 min-w-0 flex-1" />
        <label className="flex w-[101px] items-center gap-[7px] pl-1 text-[#737373]"><input type="checkbox" disabled className="h-[9px] w-[9px] appearance-none border border-[#3a3a3a]" />提示</label>
      </div>
      <div className="flex h-[23px] items-center pt-4">
        <span className={label}>端点：</span><span className="ml-[3px] h-px w-2 bg-[#303030]" /><span className="ml-4"><Svg w={6} h={4}><path d="M0 0h6L3 4z" fill="#777" /></Svg></span>
      </div>
      <div className="mt-3 flex items-center">
        <span className={label}>接合：</span><span className="ml-[3px] h-px w-2 bg-[#303030]" /><span className="ml-4"><Svg w={6} h={4}><path d="M0 0h6L3 4z" fill="#777" /></Svg></span>
        <span className="ml-auto">尖角：</span><span className="w-[75px] text-[11px] text-[#5e5e5e]">3.00</span>
      </div>
    </section>
  );
}

function Library() {
  const th = "border-l border-[#2c2c2c] pl-1 text-left font-normal";
  return (
    <section className="flex flex-1 flex-col bg-[#444444]">
      <PanelTabs tabs={["库"]} />
      <div className="flex h-[29px] items-center pr-2 pl-[5px]">
        <Select label="文档" value="按钮设置点击播放效果.fla" className="h-[18px] min-w-0 flex-1" />
        <IconButton label="固定当前库" className="ml-[11px]"><FaThumbtack size={13} color="#bcbcbc" className="rotate-90" /></IconButton>
        <IconButton label="新建库面板" className="ml-3"><Svg w={15} h={14}><path d="M0 0h9v4H5v6H0z" fill="#b0b0b0" /><path d="M6 5h9v9H6z" fill="#d0d0d0" /></Svg></IconButton>
      </div>
      <div className="flex h-[133px] justify-center bg-[#fdfdfd]">
        <div className="mr-px h-full w-[214px] rounded-[4px] bg-[#f7ca31]" />
      </div>
      <div className="flex h-7 items-end pb-px">
        <label htmlFor="lib-search" className="w-[166px] shrink-0 self-center pt-1 pl-[5px] text-[11px]">1 个项目</label>
        <div className="flex h-5 min-w-0 flex-1 items-center border border-[#1a1a1a] bg-[#9c9c9c] pl-[2px]">
          <Search stroke="#333333" />
          <input id="lib-search" className="min-w-0 flex-1 bg-transparent px-1 outline-none" />
        </div>
      </div>
      <div className="flex-1 border-x border-[#1a1a1a] bg-[#414141]">
        <table className="w-full table-fixed border-collapse">
          <thead>
            <tr className="h-5 border-y border-[#1a1a1a] bg-linear-to-b from-[#505050] to-[#424242]">
              <th className="w-[231px] pl-1 text-left font-normal"><span className="flex items-center justify-between pr-1">名称<Svg w={12} h={6}><path d="M0 0h12L6 6z" fill="#c4c4c4" /></Svg></span></th>
              <th className={`w-[71px] ${th}`}>链接</th>
              <th className={`w-[71px] ${th}`}>使用次数</th>
              <th className={`w-[129px] ${th}`}>修改日期</th>
              <th className={`w-[71px] ${th}`}>类型</th>
              <th className={th} />
            </tr>
          </thead>
          <tbody>
            <tr className="h-5 bg-[#4a4a4a]">
              <td className="pl-[21px]">
                <span className="flex items-center gap-[7px]">
                  <Svg w={14} h={14}><path d="M0 2q0-2 2-2h10q2 0 2 2v6q0 2-2 2H2q-2 0-2-2z" fill="#909090" /><path d="M6 2h2v5h4v4l-1.500 3h-4L3.500 9.500 4.500 8.500 6 10z" fill="#e0e0e0" /></Svg>
                  元件 1
                </span>
              </td>
              <td />
              <td className="pl-[5px] text-[11px]">1</td>
              <td className="pl-[5px] text-[11px] whitespace-nowrap">2022/5/10 13:25:09</td>
              <td className="pl-[5px]">按钮</td>
              <td />
            </tr>
          </tbody>
        </table>
      </div>
      <div className="flex h-[13px] border border-t-0 border-[#1a1a1a]">
        <div className="flex w-[70px] items-center gap-[7px] pl-px">
          <IconButton label="新建元件"><Svg w={10} h={10}><path d="M0 0h10v10H5V5H0z" fill="#c4c4c4" /></Svg></IconButton>
          <IconButton label="新建文件夹"><FaFolder size={11} color="#bcbcbc" /></IconButton>
          <IconButton label="属性"><FaInfoCircle size={11} color="#bcbcbc" /></IconButton>
          <IconButton label="删除"><Trash /></IconButton>
        </div>
        <ScrollTrack />
      </div>
    </section>
  );
}

export default function App() {
  return (
    <div className="relative flex min-h-screen flex-col overflow-hidden bg-black pt-[22px] pb-[23px] font-['Noto_Sans','Noto_Sans_CJK_SC',sans-serif] text-[12px] leading-4 text-[#cccccc]">
      <div className="flex flex-1 flex-col bg-[#444444]">
        <Header />
        <div className="mx-1 mb-1 flex flex-1 gap-[3px] bg-[#222222] px-px pt-px pb-px">
          <aside className="flex w-[358px] shrink-0 flex-col gap-[3px]">
            <div>
              <div className="flex h-3 items-center bg-[#2d2d2d] pl-[5px]"><Svg w={8} h={5}><path d="M3.500 0v5L0 2.500zM8 0v5L4.500 2.500z" fill="#b4b4b4" /></Svg></div>
              <ColorPanel />
            </div>
            <AlignPanel />
            <ScenePanel />
            <PresetPanel />
          </aside>
          <div className="flex min-w-0 flex-1 flex-col gap-[3px]">
            <Timeline />
            <Tools />
            <Document />
          </div>
          <aside className="flex w-[591px] shrink-0 flex-col gap-[3px]">
            <div>
              <div className="flex h-3 items-center justify-end bg-[#2d2d2d] pr-[6px]"><Svg w={8} h={5}><path d="M0 0v5l3.500-2.500zM4.500 0v5L8 2.500z" fill="#b4b4b4" /></Svg></div>
              <Properties />
            </div>
            <Library />
          </aside>
        </div>
      </div>

      {/* Recording level meter */}
      <Svg w={9} h={58} className="absolute top-[739px] right-[2px]">
        <rect x=".5" y=".5" width="8" height="57" rx="4" fill="#151515" stroke="#a8a8a8" />
        <path d="M1 8V5q0-4 3.500-4T8 5v3z" fill="#555" />
        <path d="M4.500 36v19" stroke="#5fd07a" strokeWidth="6" strokeDasharray="1.500 1" />
      </Svg>

      {/* Watermark */}
      <div className="pointer-events-none absolute bottom-[11px] left-[10px] flex items-center gap-[9px] opacity-60">
        <Svg w={40} h={40}>
          <rect width="40" height="40" rx="7" fill="#b0b0b0" />
          <path d="M5 20q3-9 14-9t16 2q-6 0-9 3 6 6 2 12t-12 4q-5-2-4-7-3-4-7-5z" fill="#333" />
          <path d="M18 16h9l-1 3h-3l-2 9h-3l2-9h-3z" fill="#b0b0b0" />
        </Svg>
        <span className="text-[36px] leading-9 font-bold text-[#b8b8b8]">tafe.cc</span>
      </div>
    </div>
  );
}
